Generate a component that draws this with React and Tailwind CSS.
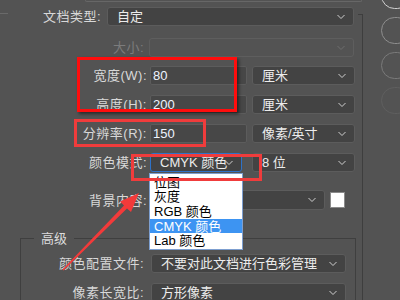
import { useState } from "react"

const Chevron = ({ dim }) => (
    <svg width="8" height="5" viewBox="0 0 8 5" className="absolute right-[8px] top-1/2 -translate-y-1/2">
        <path d="M0.5 0.5 L4 4 L7.5 0.5" fill="none" stroke={ dim ? "#6e6e6e" : "#cfcfcf" } strokeWidth="1" />
    </svg>
)

function Select({ value, className = "", dim, focus }) {
    return (
        <div className={`relative h-full flex items-center rounded-[3px] border pl-[9px] ${ focus ? "border-[#2e72c8] bg-[#434343]" : dim ? "border-[#5e5e5e] bg-[#535353]" : "border-[#5c5c5c] bg-[#434343]" } ${className}`}>
            <span className="text-[13px] text-[#ececec] leading-none">{ value }</span>
            <Chevron dim={ dim } />
        </div>
    )
}

function Field({ value, className = "" }) {
    return (
        <div className={`h-full flex items-center rounded-[2px] border border-[#5c5c5c] bg-[#474747] pl-[2px] ${className}`}>
            <span className="text-[13px] text-[#eef4ff] leading-none">{ value }</span>
        </div>
    )
}

function Label({ text, w = "w-[147px]", dim }) {
    return <div className={`${w} shrink-0 text-right text-[13px] leading-none tracking-[0.5px] ${ dim ? "text-[#7c7c7c]" : "text-[#d8d8d8]" }`}>{ text }</div>
}

export default function App() {
    const [ mode ] = useState("CMYK 颜色")
    const items = [ "位图", "灰度", "RGB 颜色", "CMYK 颜色", "Lab 颜色" ]

    return (
        <div className="relative w-[400px] h-[300px] overflow-hidden bg-[#535353]" style={{ fontFamily: "'Liberation Sans', 'Noto Sans CJK SC', sans-serif" }}>
            <div className="flex h-[300px] items-stretch">
                {/* main form column */}
                <div className="w-[362px] shrink-0">
                    <div className="flex h-[2px]">
                        <div className="w-[8px] h-0 mt-[13px] border-t border-[#6a6a6a]" />
                        <div className="ml-[77px] w-[280px] h-[2px] border-b border-x border-[#676767] rounded-b-[3px]" />
                    </div>

                    <div className="flex items-center h-[19px] mt-[5px]">
                        <Label text="文档类型:" w="w-[101px]" />
                        <Select value="自定" className="ml-[6px] w-[247px]" />
                    </div>

                    <div className="flex items-center h-[19px] mt-[12px]">
                        <Label text="大小:" w="w-[144px]" dim />
                        <Select value="" className="ml-[5px] w-[205px]" dim />
                    </div>

                    <div className="flex items-center h-[19px] mt-[9px]">
                        <Label text="宽度(W):" />
                        <Field value="80" className="ml-[3px] w-[97px]" />
                        <Select value="厘米" className="ml-[5px] w-[103px]" />
                    </div>

                    <div className="flex items-center h-[19px] mt-[10px]">
                        <Label text="高度(H):" />
                        <Field value="200" className="ml-[3px] w-[97px]" />
                        <Select value="厘米" className="ml-[5px] w-[103px]" />
                    </div>

                    <div className="flex items-center h-[19px] mt-[10px]">
                        <Label text="分辨率(R):" />
                        <Field value="150" className="ml-[3px] w-[97px]" />
                        <Select value="像素/英寸" className="ml-[5px] w-[103px]" />
                    </div>

                    <div className="flex items-center h-[19px] mt-[10px]">
                        <Label text="颜色模式:" />
                        <Select value={ mode } className="ml-[3px] w-[92px]" focus />
                        <Select value="8 位" className="ml-[10px] w-[103px]" />
                    </div>

                    <div className="flex items-center h-[20px] mt-[18px]">
                        <Label text="背景内容:" />
                        <Select value="" className="ml-[3px] w-[175px]" />
                        <div className="ml-[5px] w-[15px] h-[16px] bg-white border border-[#8a8a8a]" />
                    </div>

                    {/* advanced group */}
                    <div className="ml-[20px] mt-7 w-[336px] h-[70px] border-l border-r border-[#3f3f3f]">
                        <div className="flex items-center h-0">
                            <div className="w-[13px] border-t border-[#3f3f3f]" />
                            <div className="px-[7px] text-[13px] leading-none text-[#dcdcdc]">高级</div>
                            <div className="flex-1 border-t border-[#3f3f3f]" />
                        </div>
                        <div className="flex items-center h-[19px] mt-4">
                            <Label text="颜色配置文件:" w="w-[123px]" />
                            <Select value="不要对此文档进行色彩管理" className="ml-[7px] w-[195px]" />
                        </div>
                        <div className="flex items-center h-[19px] mt-[10px]">
                            <Label text="像素长宽比:" w="w-[123px]" />
                            <Select value="方形像素" className="ml-[7px] w-[195px]" />
                        </div>
                    </div>
                </div>

                {/* right strip */}
                <div className="flex-1 relative">
                    <div className="absolute left-0 top-[14px] bottom-0 border-l border-[#3e3e3e]" />
                    <div className="absolute left-[-4px] top-[14px] w-[4px] border-t border-[#3e3e3e]" />
                    <div className="flex flex-col gap-[8px] ml-[19px] -mt-[18px]">
                        <div className="w-[30px] h-[27px] rounded-[14px] border border-[#d0d0d0]" />
                        <div className="w-[30px] h-[27px] rounded-[14px] border border-[#8e8e8e]" />
                        <div className="w-[30px] h-[27px] rounded-[14px] border border-[#7a7a7a]" />
                        <div className="w-[30px] h-[27px] rounded-[14px] border border-[#5f5f5f]" />
                    </div>
                    <div className="absolute right-0 bottom-0 w-[8px] h-[4px] bg-[#9a9a9a]" />
                </div>
            </div>

            {/* open colour mode list */}
            <div className="absolute left-[149px] top-[173px] w-[94px] bg-white border border-[#7d9fd0] py-[1px]">
                { items.map((item) => (
                    <div key={ item } className={`h-[14.6px] pl-[4px] flex items-center text-[13px] leading-none ${ item === mode ? "bg-[#3d94f2] text-white" : "text-black" }`}>{ item }</div>
                )) }
            </div>

            {/* annotations */}
            <div className="absolute left-[77px] top-[57px] w-[160px] h-[55px] border-[3px] border-[#ff0d0d] shadow-[2px_2px_3px_rgba(0,0,0,0.5)]" />
            <div className="absolute left-[74px] top-[119px] w-[132px] h-[28px] border-[3px] border-[#f03c3c]" />
            <div className="absolute left-[131px] top-[154px] w-[131px] h-[27px] border-[3px] border-[#f03c3c]" />
            <svg className="absolute left-0 top-0" width="400" height="300" viewBox="0 0 400 300">
                <polygon points="63.5,270.5 127,208.5 131,212 139,193 120,201.5 124,205.5 62.5,269.5" fill="#f23a3a" />
            </svg>
        </div>
    )
}
